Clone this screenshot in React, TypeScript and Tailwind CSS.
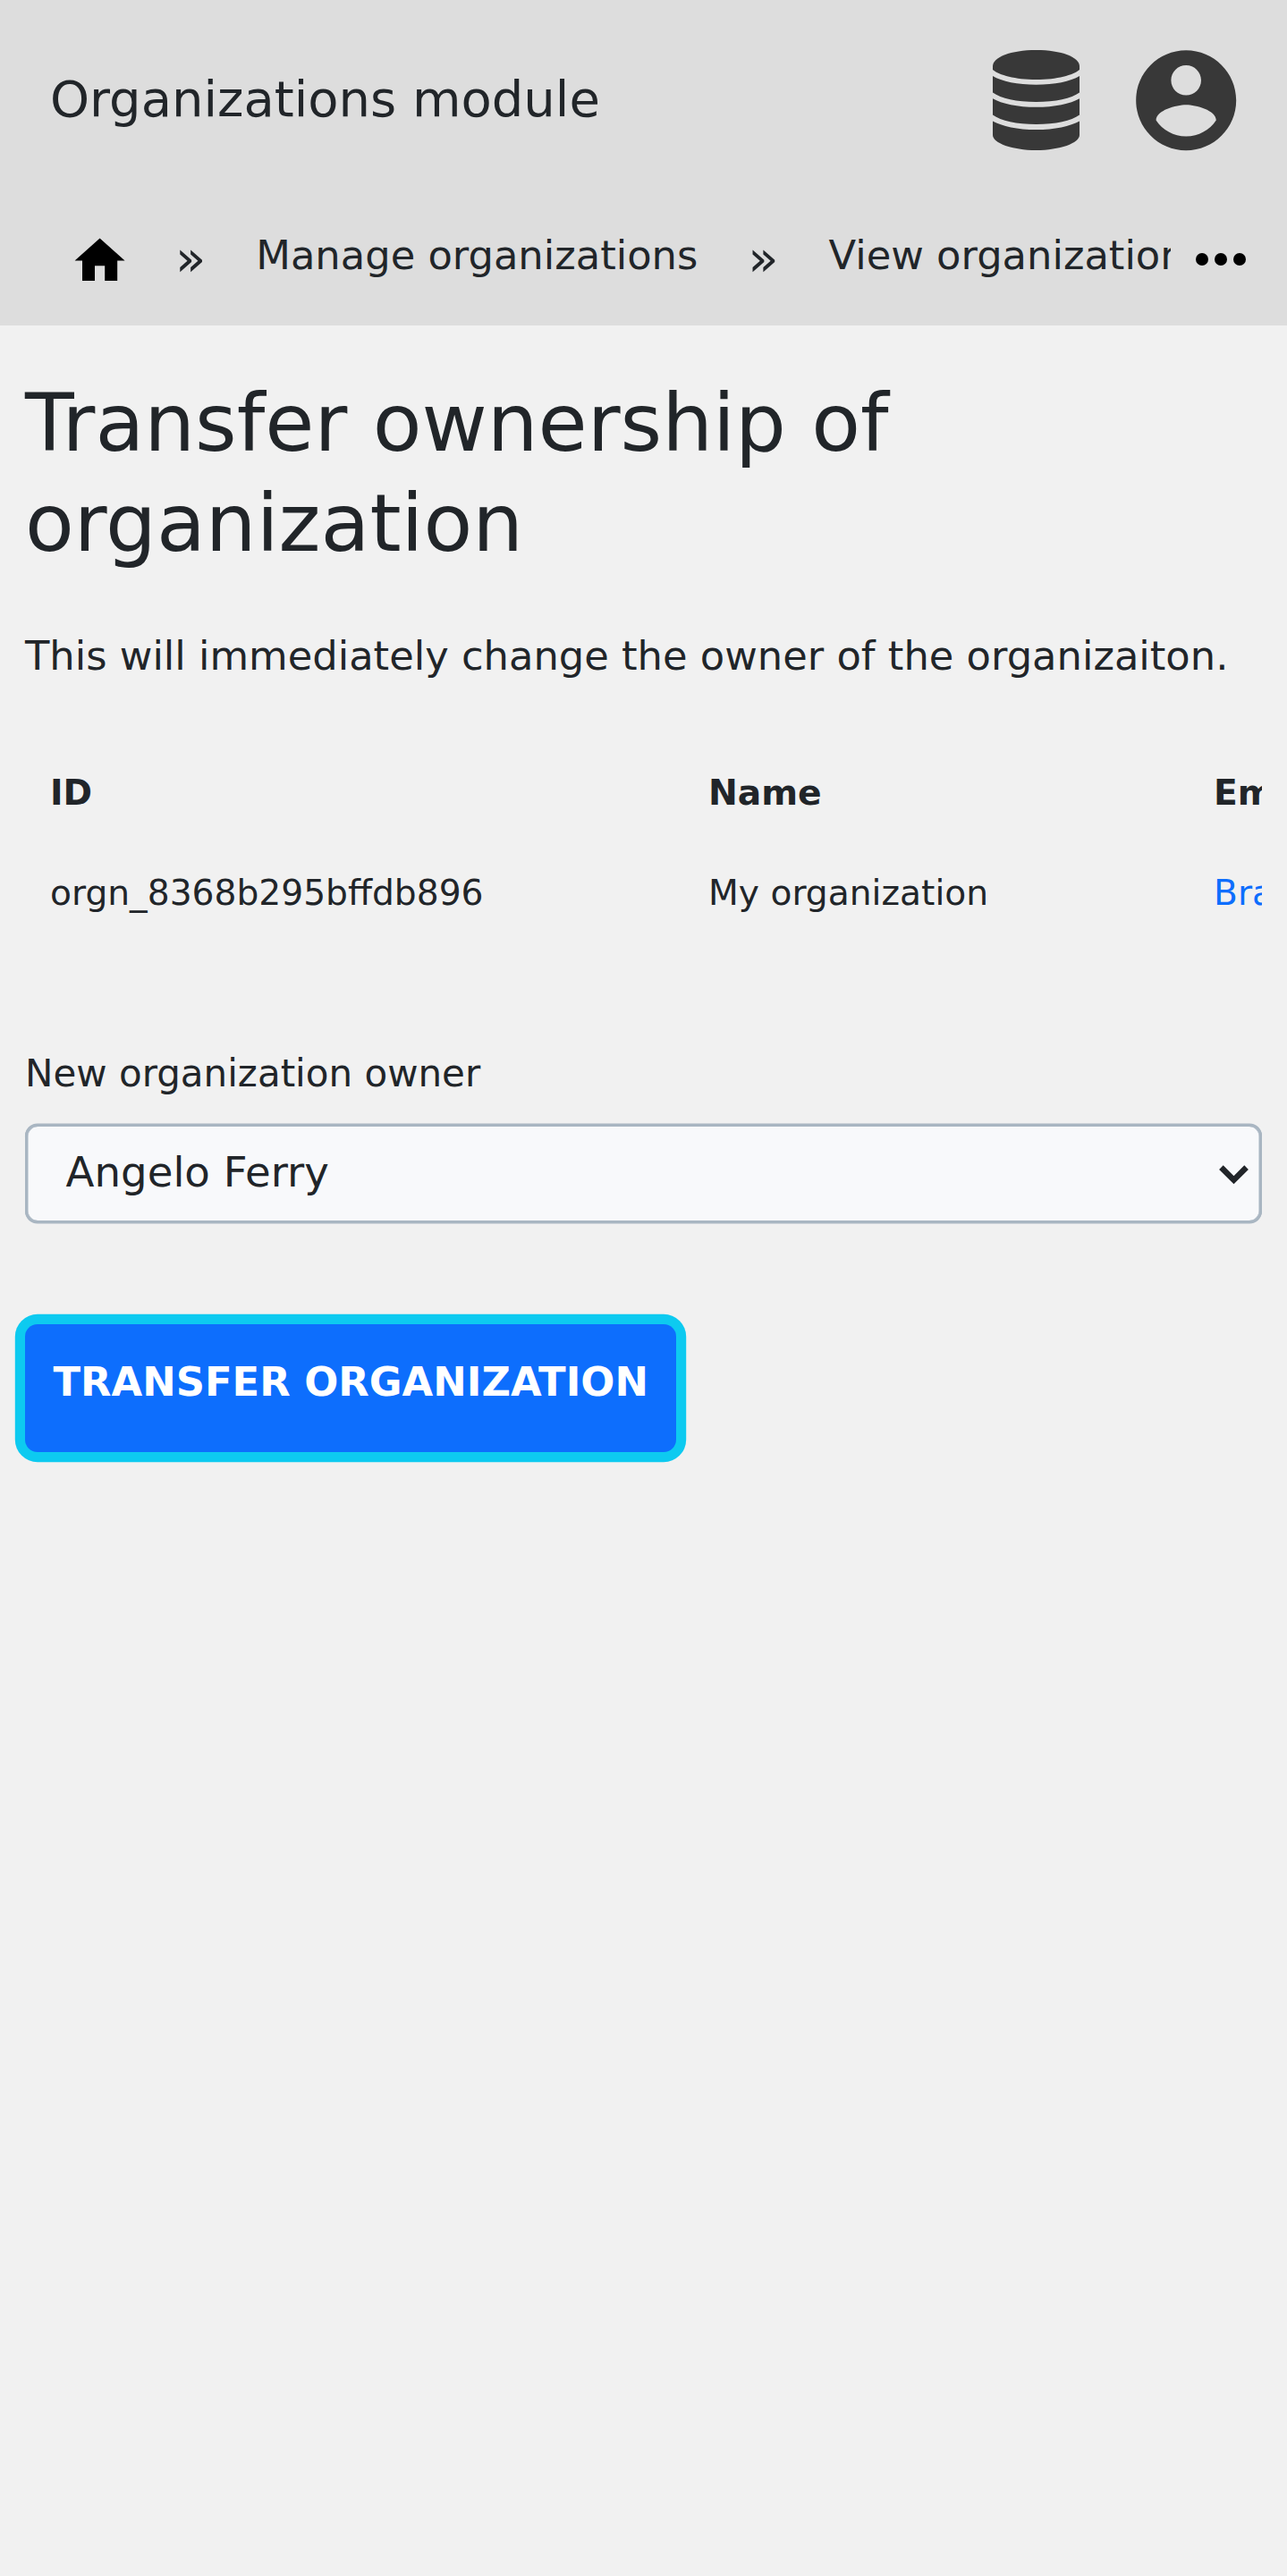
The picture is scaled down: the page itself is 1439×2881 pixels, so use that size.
import React from "react";

const crumbText = "text-[44.8px] leading-[67.2px] whitespace-nowrap";

function DatabaseIcon() {
  return (
    <svg className="h-[112px] w-[97px]" viewBox="0 0 97 112" fill="#383838">
      <path d="M0 18C0 8 20 0 48.5 0S97 8 97 18v4C90 28 72 33 48.5 33S7 28 0 22z" />
      <path d="M0 29C10 35 28 38.8 48.5 38.8S87 35 97 29V47.5C88 54 70 58 48.5 58S9 54 0 47.5z" />
      <path d="M0 54.2C10 60 28 63.8 48.5 63.8S87 60 97 54.2V72.5C88 79 70 83 48.5 83S9 79 0 72.5z" />
      <path d="M0 79.4C10 85 28 89 48.5 89S87 85 97 79.4V95C97 104 75 112 48.5 112S0 104 0 95z" />
    </svg>
  );
}

function AccountIcon() {
  return (
    <svg className="size-[134.4px]" viewBox="0 0 24 24" fill="#383838">
      <path d="M12 2C6.48 2 2 6.48 2 12s4.48 10 10 10 10-4.48 10-10S17.52 2 12 2zm0 3c1.66 0 3 1.34 3 3s-1.34 3-3 3-3-1.34-3-3 1.34-3 3-3zm0 14.2c-2.5 0-4.71-1.28-6-3.22.03-1.99 4-3.08 6-3.08 1.99 0 5.97 1.09 6 3.08-1.29 1.94-3.5 3.22-6 3.22z" />
    </svg>
  );
}

function Separator() {
  return <span className="-mt-[5px] shrink-0 text-[56px] leading-[84px]">»</span>;
}

export default function App() {
  return (
    <div className="min-h-[2881px] w-full overflow-hidden bg-[#f1f1f1] text-[#212529] font-['DejaVu_Sans',sans-serif]">
      <header className="h-[364px] bg-[#dddddd]">
        <div className="flex h-[224px] items-center justify-between pl-14 pr-[45.5px]">
          <span className="-mt-[2px] text-[56px] leading-[84px]">Organizations module</span>
          <div className="flex items-center gap-[52.1px]">
            <DatabaseIcon />
            <AccountIcon />
          </div>
        </div>
        <nav className="flex h-[140px] items-start">
          <div className="flex w-[1309px] items-start gap-14 overflow-hidden pl-[78.4px] pt-7">
            <svg className="mt-[6px] -mr-[5.6px] size-[67.2px] shrink-0" viewBox="0 0 24 24" fill="#000">
              <path d="M10 20v-6h4v6h5v-8h3L12 3 2 12h3v8z" />
            </svg>
            <Separator />
            <span className={`${crumbText} shrink-0`}>Manage organizations</span>
            <Separator />
            <span className={`${crumbText} shrink-0`}>View organization</span>
          </div>
          <svg className="mt-6 ml-[14px] size-[84px] shrink-0" viewBox="0 0 24 24" fill="#000">
            <circle cx="6" cy="12" r="2" />
            <circle cx="12" cy="12" r="2" />
            <circle cx="18" cy="12" r="2" />
          </svg>
        </nav>
      </header>
      <main className="px-7 pt-[53px]">
        <h1 className="text-[89.6px] leading-[112px]">
          Transfer ownership of
          <br />
          organization
        </h1>
        <p className="mt-[59px] text-[44.8px] leading-[67.2px]">
          This will immediately change the owner of the organizaiton.
        </p>
        <div className="mt-[64.2px] overflow-hidden">
          <table className="w-[1700px] table-fixed text-left text-[39.2px] leading-[58.8px]">
            <thead>
              <tr className="h-[112px]">
                <th className="w-[736px] pl-7 font-bold">ID</th>
                <th className="w-[565px] pl-7 font-bold">Name</th>
                <th className="pl-7 font-bold">Email</th>
              </tr>
            </thead>
            <tbody>
              <tr className="h-[112px]">
                <td className="pl-7">orgn_8368b295bffdb896</td>
                <td className="pl-7">My organization</td>
                <td className="pl-7 text-[#0d6efd]">Brandon</td>
              </tr>
            </tbody>
          </table>
        </div>
        <label className="mt-[113.6px] block text-[42px] leading-[63px]">New organization owner</label>
        <div className="mt-[25px] flex h-[111px] items-center justify-between rounded-[14px] border-[3px] border-[#a9b6c2] bg-[#f8f9fb] pr-[12.4px] pl-[42.6px] text-[46.67px] shadow-[0_0.5px_0_#a9b6c2,0_-0.5px_0_#a9b6c2,inset_0.5px_0_0_#a9b6c2,inset_-0.5px_0_0_#a9b6c2]">
          <span className="-mt-[3px] leading-[70px]">Angelo Ferry</span>
          <svg className="mt-[2.4px] h-[22px] w-[33px]" viewBox="0 0 33 22" fill="none" stroke="#212529" strokeWidth="6.5">
            <path d="M2.4 2.6L16.5 16.7L30.6 2.6" />
          </svg>
        </div>
        <button className="mt-[112.6px] flex h-[143.4px] w-[728px] rounded-[14px] bg-[#0d6efd] pt-[31.4px] pl-[31.5px] text-[44.8px] leading-[67.2px] font-bold whitespace-nowrap text-white shadow-[0_0_0_11.2px_#0dcaf0]">
          TRANSFER ORGANIZATION
        </button>
      </main>
    </div>
  );
}
